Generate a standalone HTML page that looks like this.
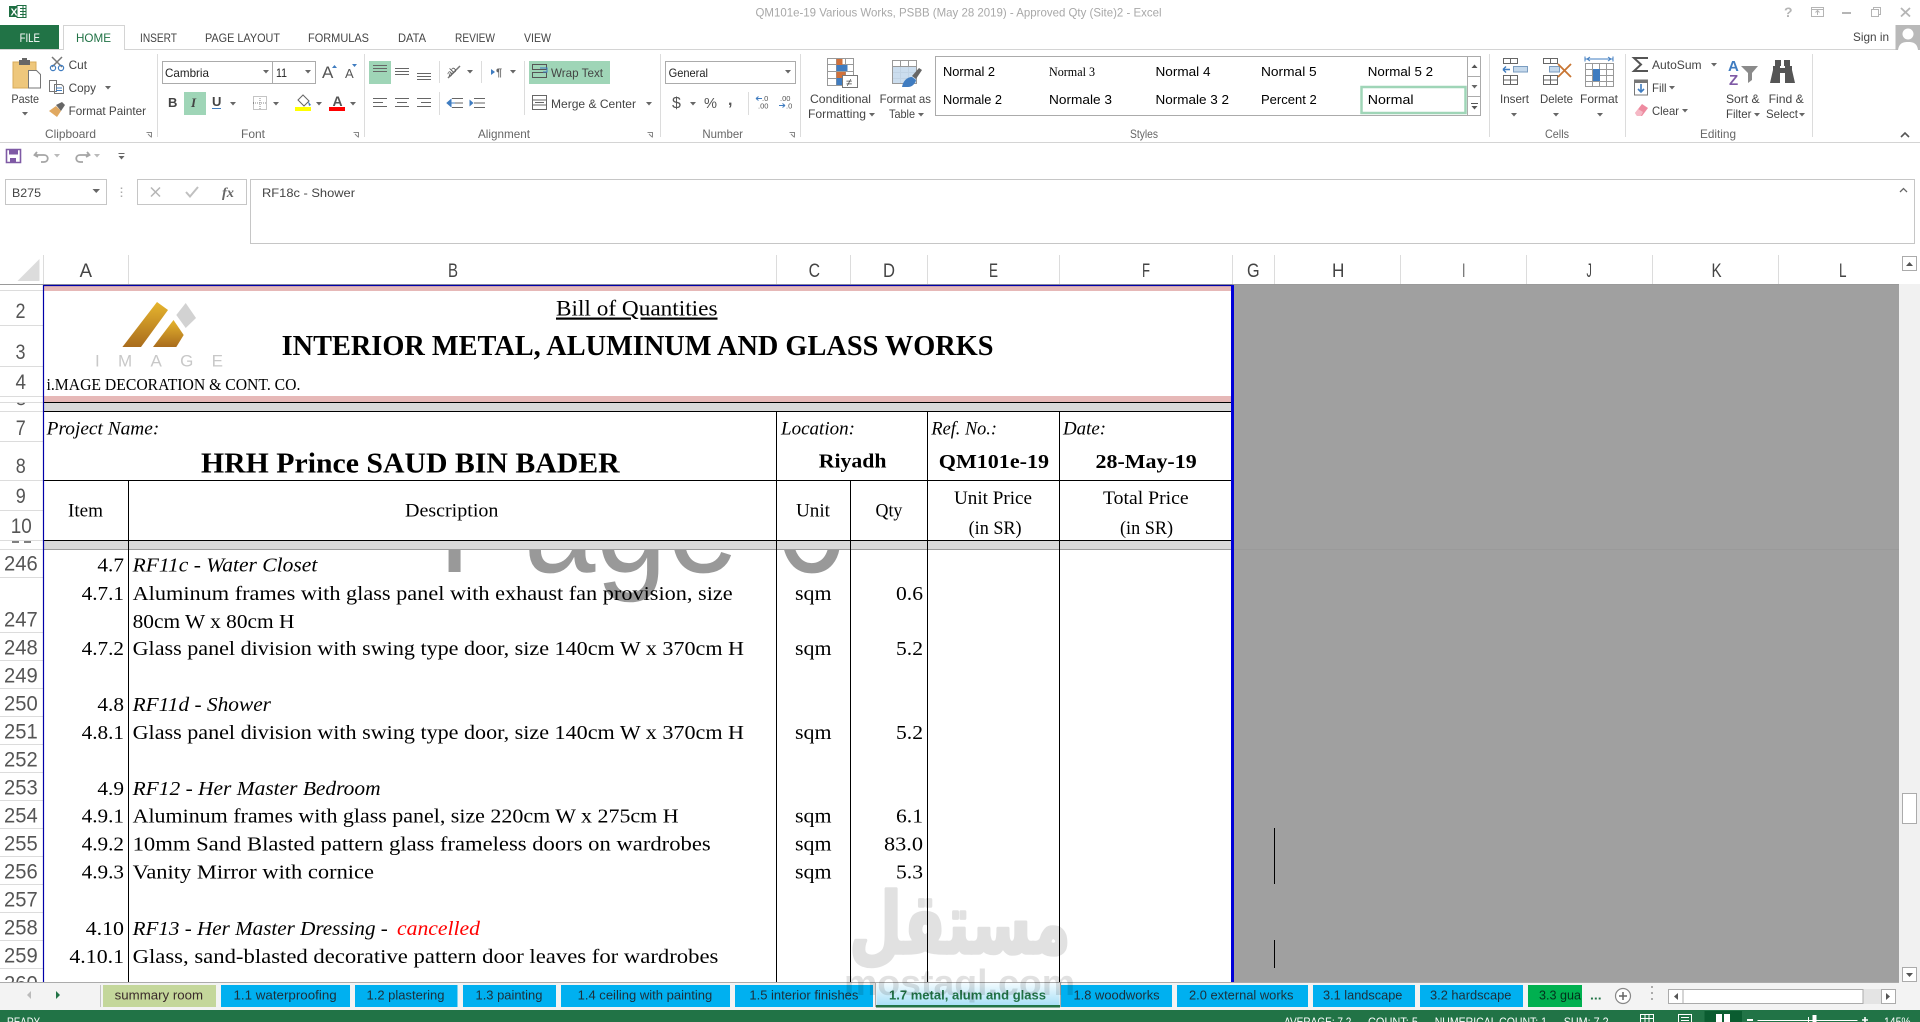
<!DOCTYPE html>
<html lang="en"><head><meta charset="utf-8"><title>Excel</title>
<style>
html,body{margin:0;padding:0;background:#fff;overflow:hidden}
svg{display:block;font-family:"Liberation Sans",sans-serif}
.u{font-size:12px;fill:#444}
.l{font-size:12px;fill:#666}
.tb{font-size:12px;fill:#444}
.s{font-family:"Liberation Serif",serif;font-size:20px;fill:#000}
.i{font-family:"Liberation Serif",serif;font-size:20px;font-style:italic;fill:#000}
.b{font-family:"Liberation Serif",serif;font-weight:bold;fill:#000}
.c{font-size:19.5px;fill:#444}
.r{font-size:21px;fill:#555}
.t{font-size:12.5px;fill:#1c2f3a}
.st{font-size:11.5px;fill:#fff}
.g{font-size:12px;fill:#000}
.k{stroke:#000;stroke-width:1;fill:none}
.h{stroke:#dcdcdc;stroke-width:1;fill:none}
.a{stroke:#666;stroke-width:1;fill:none}
</style></head><body>
<svg width="1920" height="1022" viewBox="0 0 1920 1022" xmlns="http://www.w3.org/2000/svg">
<defs>
<path id="t" d="M0 0h6l-3 3.5z" fill="#666"/>
<clipPath id="wm"><rect x="300" y="549" width="700" height="120"/></clipPath>
<clipPath id="sh"><rect x="0" y="285" width="1920" height="697"/></clipPath>
<clipPath id="sb"><rect x="0" y="1010" width="1920" height="12"/></clipPath>
<linearGradient id="gold" x1="0" y1="0" x2="0" y2="1"><stop offset="0" stop-color="#e6b52e"/><stop offset="1" stop-color="#a96c1d"/></linearGradient>
<linearGradient id="act" x1="0" y1="0" x2="0" y2="1"><stop offset="0" stop-color="#f2fbfe"/><stop offset="1" stop-color="#a3def7"/></linearGradient>
</defs>
<rect width="1920" height="1022" fill="#fff"/>

<!-- title bar -->
<rect x="9" y="6" width="11" height="11" fill="#1e6e42"/>
<rect x="17" y="5.5" width="9" height="12" fill="#fff" stroke="#1e6e42"/>
<path d="M20 8.5h6M20 11.5h6M20 14.5h6M23 5.5v12" stroke="#1e6e42" fill="none"/>
<text x="10.5" y="15.5" font-size="10.5" font-weight="bold" fill="#fff">X</text>
<text x="755.5" y="16.7" font-size="12" fill="#a8a8a8" textLength="406" lengthAdjust="spacingAndGlyphs">QM101e-19 Various Works, PSBB (May 28 2019) - Approved Qty (Site)2 - Excel</text>
<text x="1784" y="17" font-size="14" font-weight="bold" fill="#b5b5b5">?</text>
<rect x="1811.5" y="7.5" width="12" height="9" fill="none" stroke="#b5b5b5"/><path d="M1811.5 9.5h12M1817.5 15v-4M1815.5 12.5l2-2 2 2" stroke="#b5b5b5" fill="none"/>
<rect x="1842" y="12" width="9" height="2" fill="#b5b5b5"/>
<path d="M1871.5 9.5h7v7h-7zM1873.5 9.5v-2h7v7h-2" stroke="#b5b5b5" fill="none"/>
<path d="M1901 8l9 8.5M1910 8l-9 8.5" stroke="#b5b5b5" stroke-width="1.8" fill="none"/>

<!-- tabs -->
<rect x="0" y="25" width="59" height="25" fill="#217346"/>
<text x="19.6" y="42" class="tb" style="fill:#fff" textLength="20.4" lengthAdjust="spacingAndGlyphs">FILE</text>
<path d="M0 49.5H1920" stroke="#d4d4d4"/>
<path d="M63.5 50V25.5H124.5V50" stroke="#d4d4d4" fill="#fff"/>
<text x="76" y="42" class="tb" style="fill:#217346" textLength="35" lengthAdjust="spacingAndGlyphs">HOME</text>
<text x="140" y="42" class="tb" textLength="37" lengthAdjust="spacingAndGlyphs">INSERT</text>
<text x="205" y="42" class="tb" textLength="75" lengthAdjust="spacingAndGlyphs">PAGE LAYOUT</text>
<text x="308" y="42" class="tb" textLength="61" lengthAdjust="spacingAndGlyphs">FORMULAS</text>
<text x="398" y="42" class="tb" textLength="28" lengthAdjust="spacingAndGlyphs">DATA</text>
<text x="455" y="42" class="tb" textLength="40" lengthAdjust="spacingAndGlyphs">REVIEW</text>
<text x="524" y="42" class="tb" textLength="27" lengthAdjust="spacingAndGlyphs">VIEW</text>
<text x="1853" y="41" class="tb" textLength="36" lengthAdjust="spacingAndGlyphs">Sign in</text>
<rect x="1895.5" y="25" width="24.5" height="25" fill="#b9b9b9"/>
<circle cx="1908" cy="34" r="5.5" fill="#fff"/><path d="M1898 50c1-7 5-8 10-8s9 1 10 8z" fill="#fff"/>

<!-- ribbon -->
<path d="M0 142.5H1920" stroke="#d4d4d4"/>
<path d="M157.5 54V137M364.5 54V137M660.5 54V137M800.5 54V137M1489.5 54V137M1625.5 54V137M1812.5 54V137" stroke="#dcdcdc"/>
<!-- paste -->
<rect x="13" y="62" width="23" height="26" fill="#eec77c" stroke="#d8ab5a"/>
<rect x="19" y="60" width="11" height="5" fill="#666"/><rect x="22" y="58" width="5" height="3" fill="#666"/>
<path d="M28.5 70.5h8l4 4v13.5h-12z" fill="#fff" stroke="#777"/>
<text x="11.4" y="103" class="u" textLength="27.6" lengthAdjust="spacingAndGlyphs">Paste</text>
<use href="#t" x="22" y="112"/>
<!-- cut -->
<path d="M52 57l10 10M62 57l-10 10" stroke="#777" stroke-width="1.5"/>
<circle cx="53" cy="68" r="2.6" fill="none" stroke="#3f7cc0" stroke-width="1.2"/><circle cx="61" cy="68" r="2.6" fill="none" stroke="#3f7cc0" stroke-width="1.2"/>
<text x="68.6" y="69" class="u" textLength="18.4" lengthAdjust="spacingAndGlyphs">Cut</text>
<!-- copy -->
<path d="M49.5 80.5h7v11h-7zM54.5 84.5h7l2 2v7h-9z" fill="#fff" stroke="#777"/><path d="M56 88h6M56 90.5h6" stroke="#3f7cc0"/>
<text x="68.6" y="92" class="u" textLength="27.4" lengthAdjust="spacingAndGlyphs">Copy</text>
<use href="#t" x="105" y="86"/>
<!-- painter -->
<path d="M49 111l7-5 5 5-4 6z" fill="#e0a860"/><path d="M56 105l6-3 3 3-4 6z" fill="#666"/>
<text x="68.6" y="115" class="u" textLength="77.4" lengthAdjust="spacingAndGlyphs">Format Painter</text>
<text x="45" y="138" class="l" textLength="51" lengthAdjust="spacingAndGlyphs">Clipboard</text>
<path d="M146.5 132.5h5v5M148 134l3 3" stroke="#888" fill="none"/>
<!-- font -->
<rect x="162.5" y="61.5" width="110" height="22" fill="#fff" stroke="#ababab"/>
<rect x="272.5" y="61.5" width="43" height="22" fill="#fff" stroke="#ababab"/>
<text x="165" y="77" class="u" style="fill:#222" textLength="44" lengthAdjust="spacingAndGlyphs">Cambria</text>
<text x="276" y="77" class="u" style="fill:#222" textLength="11" lengthAdjust="spacingAndGlyphs">11</text>
<use href="#t" x="263" y="70"/><use href="#t" x="305" y="70"/>
<text x="322" y="78" font-size="17" fill="#555">A</text><path d="M332 68l2.5-3 2.5 3z" fill="#3f7cc0"/>
<text x="345" y="78" font-size="13" fill="#555">A</text><path d="M352 64h5l-2.500 3z" fill="#3f7cc0"/>
<text x="168" y="107" font-size="13" font-weight="bold" fill="#444">B</text>
<rect x="184" y="92" width="22" height="23" fill="#9fd5b7"/>
<text x="191" y="107" font-size="13" font-style="italic" font-weight="bold" fill="#444" font-family="Liberation Serif">I</text>
<text x="212" y="106" font-size="13" font-weight="bold" fill="#444">U</text><path d="M212 108.500h9" stroke="#3f7cc0"/>
<use href="#t" x="230" y="102"/>
<path d="M253.500 96.500h13v13h-13zM260 96v14M253 103h14" stroke="#888" stroke-dasharray="1 1" fill="none"/>
<use href="#t" x="273" y="102"/>
<path d="M298 100l5-5 6 6-5 5z" fill="#fff" stroke="#666"/><path d="M308 101l3 4-2 1z" fill="#3f7cc0"/>
<rect x="295" y="107" width="16" height="4" fill="#ff0"/><use href="#t" x="316" y="102"/>
<text x="332.500" y="106" font-size="14" font-weight="bold" fill="#555">A</text>
<rect x="329" y="107" width="16" height="4" fill="#f00"/><use href="#t" x="350" y="102"/>
<text x="241" y="138" class="l" textLength="24" lengthAdjust="spacingAndGlyphs">Font</text>
<path d="M353.500 132.500h5v5M355 134l3 3" stroke="#888" fill="none"/>
<!-- alignment -->
<rect x="369" y="61" width="22" height="23" fill="#9fd5b7"/>
<rect x="529" y="61" width="81" height="23" fill="#9fd5b7"/>
<path d="M373 65.500h14M373 68.500h14M373 71.500h14M395 68.500h14M395 71.500h14M395 74.500h14M417 73.500h14M417 76.500h14M417 79.500h14" stroke="#666"/>
<path d="M373 98.500h14M373 102.500h10M373 106.500h14M395 98.500h14M397 102.500h10M395 106.500h14M417 98.500h14M421 102.500h10M417 106.500h14" stroke="#666"/>
<path d="M448 78l12-12" stroke="#777" stroke-width="1.5"/><text x="447" y="76" font-size="9" fill="#555" transform="rotate(-45 450 73)">ab</text>
<use href="#t" x="467" y="70"/>
<path d="M491 69l4 3-4 3z" fill="#3f7cc0"/><text x="496" y="76" font-size="11" font-weight="bold" fill="#666">¶</text>
<use href="#t" x="510" y="70"/>
<path d="M439.500 61V83M439.500 92V115M481.500 61V83M524.500 61V115" stroke="#dcdcdc"/>
<path d="M452 98.500h11M455 103h8M452 107.500h11M474 98.500h11M474 103h11M474 107.500h11" stroke="#666"/>
<path d="M447 103l4-3.500v7zM451 103h4" fill="#3f7cc0" stroke="#3f7cc0"/><path d="M473.500 103l-4-3.500v7z" fill="#3f7cc0"/>
<rect x="532.500" y="64.500" width="14" height="5" fill="none" stroke="#555"/><rect x="532.500" y="72.500" width="14" height="5" fill="none" stroke="#555"/>
<path d="M540 68h7v4h-4" stroke="#3f7cc0" fill="none"/>
<text x="551" y="77" class="u" textLength="52" lengthAdjust="spacingAndGlyphs">Wrap Text</text>
<path d="M532.500 95.500h14v14h-14zM532.500 100h14M532.500 105h14M535 102.500h9" stroke="#666" fill="none"/>
<text x="551" y="108" class="u" textLength="85" lengthAdjust="spacingAndGlyphs">Merge &amp; Center</text>
<use href="#t" x="646" y="102"/>
<text x="478" y="138" class="l" textLength="52" lengthAdjust="spacingAndGlyphs">Alignment</text>
<path d="M647.500 132.500h5v5M649 134l3 3" stroke="#888" fill="none"/>
<!-- number -->
<rect x="665.500" y="61.500" width="130" height="22" fill="#fff" stroke="#ababab"/>
<text x="668.600" y="77" class="u" style="fill:#222" textLength="39.400" lengthAdjust="spacingAndGlyphs">General</text>
<use href="#t" x="785" y="70"/>
<text x="672" y="108" font-size="16" fill="#555">$</text><use href="#t" x="690" y="102"/>
<text x="704" y="108" font-size="15" fill="#555" textLength="13" lengthAdjust="spacingAndGlyphs">%</text>
<text x="728" y="105" font-size="16" font-weight="bold" fill="#555">,</text>
<path d="M748.500 92V115" stroke="#dcdcdc"/>
<text x="762" y="101" font-size="7.500" fill="#555">.0</text><text x="758" y="108.500" font-size="7.500" fill="#555">.00</text>
<path d="M756 98.500h6M756 98.500l2.500-2M756 98.500l2.500 2" stroke="#3f7cc0"/>
<text x="780" y="101" font-size="7.500" fill="#555">.00</text><text x="786" y="108.500" font-size="7.500" fill="#555">.0</text>
<path d="M779 105.500h6M785 105.500l-2.500-2M785 105.500l-2.500 2" stroke="#3f7cc0"/>
<text x="702.400" y="138" class="l" textLength="40.600" lengthAdjust="spacingAndGlyphs">Number</text>
<path d="M789.500 132.500h5v5M791 134l3 3" stroke="#888" fill="none"/>
<!-- conditional -->
<path d="M827.500 58.500h26v27h-26zM827.500 64.500h26M827.500 71.500h26M827.500 78.500h26M836.500 58.500v27M845.500 58.500v27" stroke="#999" fill="#fff"/>
<rect x="836.500" y="59" width="6" height="6" fill="#d0703a"/><rect x="836.500" y="65" width="11" height="6" fill="#3f7cc0"/><rect x="836.500" y="72" width="9" height="6" fill="#d0703a"/><rect x="836.500" y="78" width="6" height="7" fill="#3f7cc0"/>
<rect x="842.500" y="75.500" width="15" height="12" fill="#fff" stroke="#777"/><text x="846" y="86" font-size="11" fill="#444">≠</text>
<text x="810" y="103" class="u" textLength="61" lengthAdjust="spacingAndGlyphs">Conditional</text>
<text x="808" y="118" class="u" textLength="58" lengthAdjust="spacingAndGlyphs">Formatting</text><use href="#t" x="869" y="113"/>
<!-- format as table -->
<path d="M892.500 60.500h24v23h-24zM892.500 66.500h24M892.500 72.500h24M892.500 78.500h24M900.500 60.500v23M908.500 60.500v23" stroke="#999" fill="#fff"/>
<rect x="893" y="67" width="23" height="16" fill="#c5d9ec" opacity=".9"/>
<path d="M912 76l7-8 3 2-6 9z" fill="#666"/><path d="M902 87c1-6 5-10 10-10l4 3c-1 4-4 7-8 7z" fill="#3f7cc0"/>
<text x="879.600" y="103" class="u" textLength="51.400" lengthAdjust="spacingAndGlyphs">Format as</text>
<text x="889" y="118" class="u" textLength="26" lengthAdjust="spacingAndGlyphs">Table</text><use href="#t" x="918" y="113"/>
<!-- styles -->
<rect x="935.500" y="56.500" width="545" height="59" fill="#fff" stroke="#ababab"/>
<path d="M1467.500 56.500V115.500M1467.500 76.500H1481M1467.500 96.500H1481" stroke="#ababab"/>
<path d="M1471.500 68l3-3.500 3 3.500z" fill="#555"/><use href="#t" x="1471.500" y="85"/><path d="M1471.500 106h6l-3 3.500z" stroke="none" fill="#555"/><path d="M1471 103.500h7" stroke="#555"/>
<rect x="1361.500" y="87" width="104" height="26" fill="#fff" stroke="#9fd5b7" stroke-width="2.500"/>
<g font-size="12.500" fill="#000">
<text x="943" y="76" textLength="52" lengthAdjust="spacingAndGlyphs">Normal 2</text>
<text x="1049" y="76" font-family="Liberation Serif" textLength="46" lengthAdjust="spacingAndGlyphs">Normal 3</text>
<text x="1155.500" y="76" textLength="55" lengthAdjust="spacingAndGlyphs">Normal 4</text>
<text x="1261" y="76" textLength="55.700" lengthAdjust="spacingAndGlyphs">Normal 5</text>
<text x="1367.800" y="76" textLength="65.200" lengthAdjust="spacingAndGlyphs">Normal 5 2</text>
<text x="943" y="104" textLength="59" lengthAdjust="spacingAndGlyphs">Normale 2</text>
<text x="1049" y="104" textLength="63" lengthAdjust="spacingAndGlyphs">Normale 3</text>
<text x="1155.500" y="104" textLength="73.500" lengthAdjust="spacingAndGlyphs">Normale 3 2</text>
<text x="1261" y="104" textLength="55.700" lengthAdjust="spacingAndGlyphs">Percent 2</text>
<text x="1367.800" y="104" textLength="45.700" lengthAdjust="spacingAndGlyphs">Normal</text>
</g>
<text x="1130" y="138" class="l" textLength="28" lengthAdjust="spacingAndGlyphs">Styles</text>
<!-- cells -->
<path d="M1503.500 58.500h14v5h-14zM1510.500 58.500v5M1503.500 75.500h14v9h-14zM1503.500 80h14M1510.500 75.500v9" stroke="#666" fill="#fff"/>
<rect x="1513.500" y="66.500" width="14" height="5.500" fill="#c5d9ec" stroke="#7a9cc0"/><path d="M1503 69.500h7M1503 69.500l3-3M1503 69.500l3 3" stroke="#3f7cc0" stroke-width="1.400"/>
<path d="M1543.500 58.500h14v5h-14zM1550.500 58.500v5M1543.500 75.500h14v9h-14zM1543.500 80h14M1550.500 75.500v9" stroke="#666" fill="#fff"/>
<rect x="1549.500" y="66.500" width="10" height="5.500" fill="#c5d9ec" stroke="#7a9cc0"/><path d="M1558 64l13 13M1571 64l-13 13" stroke="#c87533" stroke-width="1.800"/>
<path d="M1585.500 63.500h28v23h-28zM1585.500 69.500h28M1585.500 75.500h28M1585.500 81.500h28M1592.500 63.500v23M1599.500 63.500v23M1606.500 63.500v23" stroke="#999" fill="#fff"/>
<rect x="1593" y="69" width="7" height="12" fill="#3f7cc0"/><path d="M1585 59h28M1585 56.500v5M1613 56.500v5M1587 59l3-2M1587 59l3 2M1611 59l-3-2M1611 59l-3 2" stroke="#3f7cc0" fill="none"/>
<text x="1500" y="103" class="u" textLength="29" lengthAdjust="spacingAndGlyphs">Insert</text>
<text x="1540" y="103" class="u" textLength="33" lengthAdjust="spacingAndGlyphs">Delete</text>
<text x="1580" y="103" class="u" textLength="38" lengthAdjust="spacingAndGlyphs">Format</text>
<use href="#t" x="1511" y="113"/><use href="#t" x="1553" y="113"/><use href="#t" x="1597" y="113"/>
<text x="1545" y="138" class="l" textLength="24" lengthAdjust="spacingAndGlyphs">Cells</text>
<!-- editing -->
<path d="M1648 58h-14l7 6.500-7 6.500h14" stroke="#555" stroke-width="2" fill="none"/>
<text x="1652" y="69" class="u" textLength="49.600" lengthAdjust="spacingAndGlyphs">AutoSum</text><use href="#t" x="1711" y="63"/>
<rect x="1634.500" y="80" width="13" height="15" fill="#fff" stroke="#777"/><rect x="1634.500" y="80" width="13" height="3" fill="#777"/><path d="M1641 84v8M1638 89l3 3 3-3" stroke="#3f7cc0" stroke-width="1.600" fill="none"/>
<text x="1652" y="92" class="u" textLength="14.600" lengthAdjust="spacingAndGlyphs">Fill</text><use href="#t" x="1669" y="86"/>
<path d="M1635 113l7-9 6 4-6 8h-5z" fill="#ee8ba0"/><path d="M1635 113l3-4 5 3-2 4h-4z" fill="#f5b8c5"/>
<text x="1652" y="115" class="u" textLength="27" lengthAdjust="spacingAndGlyphs">Clear</text><use href="#t" x="1682" y="109"/>
<text x="1728" y="71" font-size="15" font-weight="bold" fill="#3f7cc0">A</text>
<text x="1729" y="85" font-size="15" font-weight="bold" fill="#7f5aa5">Z</text>
<path d="M1741 66h17l-6 7v7l-4 3v-10z" fill="#8a8a8a"/>
<text x="1726" y="103" class="u" textLength="33.600" lengthAdjust="spacingAndGlyphs">Sort &amp;</text>
<text x="1726" y="118" class="u" textLength="25.400" lengthAdjust="spacingAndGlyphs">Filter</text><use href="#t" x="1754" y="113"/>
<path d="M1775 60h6v6h-1v2h5v-2h-1v-6h6v6h2v4l3 13h-10v-10h-5v10h-10l3-13v-4h2z" fill="#555"/>
<text x="1768.600" y="103" class="u" textLength="35.100" lengthAdjust="spacingAndGlyphs">Find &amp;</text>
<text x="1766" y="118" class="u" textLength="32" lengthAdjust="spacingAndGlyphs">Select</text><use href="#t" x="1799" y="113"/>
<text x="1700" y="138" class="l" textLength="36" lengthAdjust="spacingAndGlyphs">Editing</text>
<path d="M1901 137l4-4 4 4" stroke="#555" stroke-width="1.600" fill="none"/>

<!-- QAT -->
<path d="M6.500 149.500h14v13h-14z" fill="#fff" stroke="#7f5aa5" stroke-width="1.600"/><rect x="9" y="150" width="9" height="4.500" fill="#7f5aa5"/><rect x="10" y="158" width="6" height="4" fill="#7f5aa5"/>
<path d="M37 152l-2.500 3 3.500 2M35 155h9c5 0 5 7 0 7h-3" stroke="#a5a5a5" stroke-width="1.800" fill="none"/><use href="#t" x="54" y="154" opacity=".45"/>
<path d="M87 152l2.500 3-3.500 2M89 155h-9c-5 0-5 7 0 7h3" stroke="#a5a5a5" stroke-width="1.800" fill="none"/><use href="#t" x="94" y="154" opacity=".45"/>
<path d="M118.500 153.500h6" stroke="#666"/><use href="#t" x="118.500" y="156"/>

<!-- formula bar -->
<rect x="5.500" y="179.500" width="101" height="25" fill="#fff" stroke="#c6c6c6"/>
<text x="12" y="197" class="u" textLength="29" lengthAdjust="spacingAndGlyphs">B275</text>
<path d="M92.500 189h7.500l-3.750 4z" fill="#666"/>
<path d="M121.500 187.500v1.500M121.500 191.500v1.500M121.500 195.500v1.500" stroke="#aaa" stroke-width="1.500"/>
<rect x="137.500" y="179.500" width="109" height="25" fill="#fff" stroke="#c6c6c6"/>
<path d="M151 187.500l9 9M160 187.500l-9 9" stroke="#b5b5b5" stroke-width="1.500"/>
<path d="M186 192l4 4.500 8-9.500" stroke="#c0c0c0" stroke-width="2" fill="none"/>
<text x="222" y="197" font-family="Liberation Serif" font-style="italic" font-weight="bold" font-size="14" fill="#666" textLength="12" lengthAdjust="spacingAndGlyphs">fx</text>
<rect x="250.500" y="179.500" width="1664" height="64" fill="#fff" stroke="#c6c6c6"/>
<text x="262" y="197" class="u" textLength="93" lengthAdjust="spacingAndGlyphs">RF18c - Shower</text>
<path d="M1900 192l3.500-3.500 3.500 3.500" stroke="#666" fill="none" stroke-width="1.300"/>

<!-- column headers -->
<path d="M39.500 259v22h-22z" fill="#dcdcdc"/>
<path d="M43.500 255V284M128.500 255V284M776.500 255V284M850.500 255V284M927.500 255V284M1059.500 255V284M1232.500 255V284M1274.500 255V284M1400.500 255V284M1526.500 255V284M1652.500 255V284M1778.500 255V284" class="h"/>
<path d="M0 284.500H1900" stroke="#9a9a9a"/>
<g class="c">
<text x="79.600" y="277" textLength="12.400" lengthAdjust="spacingAndGlyphs">A</text>
<text x="448" y="277" textLength="10" lengthAdjust="spacingAndGlyphs">B</text>
<text x="808.600" y="277" textLength="11.400" lengthAdjust="spacingAndGlyphs">C</text>
<text x="883" y="277" textLength="12" lengthAdjust="spacingAndGlyphs">D</text>
<text x="989" y="277" textLength="9" lengthAdjust="spacingAndGlyphs">E</text>
<text x="1142" y="277" textLength="8" lengthAdjust="spacingAndGlyphs">F</text>
<text x="1247" y="277" textLength="12.600" lengthAdjust="spacingAndGlyphs">G</text>
<text x="1332" y="277" textLength="12.400" lengthAdjust="spacingAndGlyphs">H</text>
<text x="1462.400" y="277" textLength="2.800" lengthAdjust="spacingAndGlyphs">I</text>
<text x="1586.500" y="277" textLength="5.300" lengthAdjust="spacingAndGlyphs">J</text>
<text x="1711.500" y="277" textLength="10.100" lengthAdjust="spacingAndGlyphs">K</text>
<text x="1839" y="277" textLength="7.500" lengthAdjust="spacingAndGlyphs">L</text>
</g>

<!-- sheet grey -->
<rect x="1233" y="285" width="666" height="697" fill="#a0a0a0"/>
<path d="M1274.500 828V884M1274.500 940V968" stroke="#000" stroke-width="1"/>

<!-- watermark page -->
<g clip-path="url(#wm)"><text x="438" y="572" font-size="146" fill="#999" textLength="408" lengthAdjust="spacingAndGlyphs">Page 6</text></g>

<!-- row headers -->
<g clip-path="url(#sh)">
<path d="M0 290.500H43M0 325.500H43M0 366.500H43M0 396.500H43M0 402.500H43M0 411.500H43M0 441.500H43M0 480.500H43M0 510.500H43M0 540.500H43M0 549.500H43M0 577.500H43M0 632.500H43M0 660.500H43M0 688.500H43M0 716.500H43M0 744.500H43M0 772.500H43M0 800.500H43M0 828.500H43M0 856.500H43M0 884.500H43M0 912.500H43M0 940.500H43M0 968.500H43" class="h"/>
<path d="M17.500 403c2 2 5 2 7 0M12 542h7M24 542h7" stroke="#555" stroke-width="1.400" fill="none"/>
<g class="r">
<text x="15.500" y="318" textLength="10" lengthAdjust="spacingAndGlyphs">2</text>
<text x="15.500" y="359" textLength="10" lengthAdjust="spacingAndGlyphs">3</text>
<text x="15.500" y="389" textLength="10.500" lengthAdjust="spacingAndGlyphs">4</text>
<text x="15.700" y="435" textLength="10" lengthAdjust="spacingAndGlyphs">7</text>
<text x="15.700" y="473" textLength="10" lengthAdjust="spacingAndGlyphs">8</text>
<text x="15.700" y="503" textLength="10" lengthAdjust="spacingAndGlyphs">9</text>
<text x="10.700" y="533" textLength="21" lengthAdjust="spacingAndGlyphs">10</text>
<text x="4" y="570.700" textLength="33.700" lengthAdjust="spacingAndGlyphs">246</text>
<text x="4" y="626.500" textLength="33.700" lengthAdjust="spacingAndGlyphs">247</text>
<text x="4" y="654.500" textLength="33.700" lengthAdjust="spacingAndGlyphs">248</text>
<text x="4" y="682.500" textLength="33.700" lengthAdjust="spacingAndGlyphs">249</text>
<text x="4" y="710.500" textLength="33.700" lengthAdjust="spacingAndGlyphs">250</text>
<text x="4" y="738.500" textLength="33.700" lengthAdjust="spacingAndGlyphs">251</text>
<text x="4" y="766.500" textLength="33.700" lengthAdjust="spacingAndGlyphs">252</text>
<text x="4" y="794.500" textLength="33.700" lengthAdjust="spacingAndGlyphs">253</text>
<text x="4" y="822.500" textLength="33.700" lengthAdjust="spacingAndGlyphs">254</text>
<text x="4" y="850.500" textLength="33.700" lengthAdjust="spacingAndGlyphs">255</text>
<text x="4" y="878.500" textLength="33.700" lengthAdjust="spacingAndGlyphs">256</text>
<text x="4" y="906.500" textLength="33.700" lengthAdjust="spacingAndGlyphs">257</text>
<text x="4" y="934.500" textLength="33.700" lengthAdjust="spacingAndGlyphs">258</text>
<text x="4" y="962.500" textLength="33.700" lengthAdjust="spacingAndGlyphs">259</text>
<text x="4" y="990.500" textLength="33.700" lengthAdjust="spacingAndGlyphs">260</text>
</g>
</g>

<!-- sheet header bands -->
<rect x="44" y="286" width="1187" height="5" fill="#e6b8b7"/>
<rect x="44" y="396" width="1187" height="6" fill="#e6b8b7"/>
<rect x="44" y="402.500" width="1187" height="8.500" fill="#d9d9d9"/>
<rect x="44" y="540.500" width="1187" height="8.500" fill="#d9d9d9"/>
<path d="M43 402.500H1232M43 411.500H1232M43 480.500H1232M43 540.500H1232" class="k"/>
<path d="M43 549.500H1899" stroke="#9a9a9a"/>
<path d="M128.500 480V982M776.500 411V982M850.500 480V982M927.500 411V982M1059.500 411V982" class="k"/>
<path d="M43.500 285V982" stroke="#0000a8" stroke-width="1.200"/>
<path d="M43 285.500H1233" stroke="#0000a8" stroke-width="1.200"/>
<path d="M1232.500 285V982" stroke="#0000d8" stroke-width="3"/>

<!-- logo -->
<path d="M157 302l11 8-27 37h-18.600z" fill="url(#gold)"/>
<path d="M173.500 320l10.200 15-7.400 12H153z" fill="url(#gold)"/>
<path d="M185.700 303l10.300 15-10.300 10-9.400-13z" fill="#d2d2d2"/>
<text x="95" y="366.700" font-size="17" fill="#c8c8c8" textLength="128">IMAGE</text>

<!-- header text -->
<text x="556" y="315.500" class="s" style="font-size:22px;text-decoration:underline" textLength="161.500" lengthAdjust="spacingAndGlyphs">Bill of Quantities</text>
<text x="281.600" y="355" class="b" font-size="29" textLength="711.900" lengthAdjust="spacingAndGlyphs">INTERIOR METAL, ALUMINUM AND GLASS WORKS</text>
<text x="46.500" y="390" class="s" style="font-size:16.500px" textLength="253.900" lengthAdjust="spacingAndGlyphs">i.MAGE DECORATION &amp; CONT. CO.</text>
<text x="46.700" y="434.300" class="i" style="font-size:18.500px" textLength="112.600" lengthAdjust="spacingAndGlyphs">Project Name:</text>
<text x="781" y="434.300" class="i" style="font-size:18.500px" textLength="74" lengthAdjust="spacingAndGlyphs">Location:</text>
<text x="931.400" y="434.300" class="i" style="font-size:18.500px" textLength="65.600" lengthAdjust="spacingAndGlyphs">Ref. No.:</text>
<text x="1063" y="434.300" class="i" style="font-size:18.500px" textLength="43" lengthAdjust="spacingAndGlyphs">Date:</text>
<text x="201" y="472.600" class="b" font-size="29" textLength="418.600" lengthAdjust="spacingAndGlyphs">HRH Prince SAUD BIN BADER</text>
<text x="818.800" y="467.700" class="b" font-size="20" textLength="67.700" lengthAdjust="spacingAndGlyphs">Riyadh</text>
<text x="938.800" y="468" class="b" font-size="20" textLength="110.200" lengthAdjust="spacingAndGlyphs">QM101e-19</text>
<text x="1095.500" y="468" class="b" font-size="20" textLength="101.200" lengthAdjust="spacingAndGlyphs">28-May-19</text>
<g class="s" style="font-size:18.500px">
<text x="68" y="516.700" textLength="35" lengthAdjust="spacingAndGlyphs">Item</text>
<text x="405" y="516.700" textLength="93.400" lengthAdjust="spacingAndGlyphs">Description</text>
<text x="796" y="516.700" textLength="34" lengthAdjust="spacingAndGlyphs">Unit</text>
<text x="875.500" y="516.700" textLength="26.900" lengthAdjust="spacingAndGlyphs">Qty</text>
<text x="954" y="504" textLength="78" lengthAdjust="spacingAndGlyphs">Unit Price</text>
<text x="968.600" y="534" textLength="53" lengthAdjust="spacingAndGlyphs">(in SR)</text>
<text x="1103" y="504" textLength="85.600" lengthAdjust="spacingAndGlyphs">Total Price</text>
<text x="1120" y="534" textLength="53" lengthAdjust="spacingAndGlyphs">(in SR)</text>
</g>

<!-- data -->
<g class="s">
<text x="97.400" y="571.700" textLength="26.600" lengthAdjust="spacingAndGlyphs">4.7</text>
<text x="81.600" y="600" textLength="42.400" lengthAdjust="spacingAndGlyphs">4.7.1</text>
<text x="81.600" y="655" textLength="42.400" lengthAdjust="spacingAndGlyphs">4.7.2</text>
<text x="97.400" y="711" textLength="26.600" lengthAdjust="spacingAndGlyphs">4.8</text>
<text x="81.600" y="739" textLength="42.400" lengthAdjust="spacingAndGlyphs">4.8.1</text>
<text x="97.400" y="795" textLength="26.600" lengthAdjust="spacingAndGlyphs">4.9</text>
<text x="81.600" y="822.700" textLength="42.400" lengthAdjust="spacingAndGlyphs">4.9.1</text>
<text x="81.600" y="850.700" textLength="42.400" lengthAdjust="spacingAndGlyphs">4.9.2</text>
<text x="81.600" y="878.700" textLength="42.400" lengthAdjust="spacingAndGlyphs">4.9.3</text>
<text x="85.700" y="935" textLength="38.300" lengthAdjust="spacingAndGlyphs">4.10</text>
<text x="69.400" y="963" textLength="54.600" lengthAdjust="spacingAndGlyphs">4.10.1</text>
<text x="132.600" y="600" textLength="600.100" lengthAdjust="spacingAndGlyphs">Aluminum frames with glass panel with exhaust fan provision, size</text>
<text x="132.600" y="628" textLength="161.800" lengthAdjust="spacingAndGlyphs">80cm W x 80cm H</text>
<text x="132.600" y="655" textLength="611.400" lengthAdjust="spacingAndGlyphs">Glass panel division with swing type door, size 140cm W x 370cm H</text>
<text x="132.600" y="739" textLength="611.400" lengthAdjust="spacingAndGlyphs">Glass panel division with swing type door, size 140cm W x 370cm H</text>
<text x="132.600" y="822.700" textLength="546" lengthAdjust="spacingAndGlyphs">Aluminum frames with glass panel, size 220cm W x 275cm H</text>
<text x="132.600" y="850.700" textLength="578.100" lengthAdjust="spacingAndGlyphs">10mm Sand Blasted pattern glass frameless doors on wardrobes</text>
<text x="132.600" y="878.700" textLength="241.400" lengthAdjust="spacingAndGlyphs">Vanity Mirror with cornice</text>
<text x="132.600" y="963" textLength="585.800" lengthAdjust="spacingAndGlyphs">Glass, sand-blasted decorative pattern door leaves for wardrobes</text>
<text x="795" y="600" textLength="36.500" lengthAdjust="spacingAndGlyphs">sqm</text>
<text x="795" y="655" textLength="36.500" lengthAdjust="spacingAndGlyphs">sqm</text>
<text x="795" y="739" textLength="36.500" lengthAdjust="spacingAndGlyphs">sqm</text>
<text x="795" y="822.700" textLength="36.500" lengthAdjust="spacingAndGlyphs">sqm</text>
<text x="795" y="850.700" textLength="36.500" lengthAdjust="spacingAndGlyphs">sqm</text>
<text x="795" y="878.700" textLength="36.500" lengthAdjust="spacingAndGlyphs">sqm</text>
<text x="896" y="600" textLength="27" lengthAdjust="spacingAndGlyphs">0.6</text>
<text x="896" y="655" textLength="27" lengthAdjust="spacingAndGlyphs">5.2</text>
<text x="896" y="739" textLength="27" lengthAdjust="spacingAndGlyphs">5.2</text>
<text x="896" y="822.700" textLength="27" lengthAdjust="spacingAndGlyphs">6.1</text>
<text x="884" y="850.700" textLength="39" lengthAdjust="spacingAndGlyphs">83.0</text>
<text x="896" y="878.700" textLength="27" lengthAdjust="spacingAndGlyphs">5.3</text>
</g>
<g class="i">
<text x="132.600" y="571.700" textLength="184.700" lengthAdjust="spacingAndGlyphs">RF11c - Water Closet</text>
<text x="132.600" y="711" textLength="138.400" lengthAdjust="spacingAndGlyphs">RF11d - Shower</text>
<text x="132.600" y="795" textLength="248" lengthAdjust="spacingAndGlyphs">RF12 - Her Master Bedroom</text>
<text x="132.600" y="935" textLength="255.200" lengthAdjust="spacingAndGlyphs">RF13 - Her Master Dressing -</text>
<text x="397" y="935" style="fill:#f00" textLength="83" lengthAdjust="spacingAndGlyphs">cancelled</text>
</g>

<!-- vertical scrollbar -->
<rect x="1899" y="250" width="21" height="760" fill="#f1f1f1"/>
<rect x="1899" y="250" width="21" height="34" fill="#fff"/>
<rect x="1902.500" y="256.500" width="14" height="14" fill="#fff" stroke="#ababab"/><path d="M1906 266l3.500-4 3.500 4z" fill="#555"/>
<rect x="1902.500" y="793.500" width="14" height="30" fill="#fff" stroke="#ababab"/>
<rect x="1902.500" y="967.500" width="14" height="14" fill="#fff" stroke="#ababab"/><path d="M1906 973h7l-3.500 4z" fill="#555"/>

<!-- tab strip -->
<rect x="0" y="982" width="1920" height="28" fill="#f3f3f3"/>
<path d="M0 982.500H876M1060 982.500H1899" stroke="#ababab"/>
<path d="M31 991l-4 4 4 4z" fill="#bbb"/><path d="M56 991l4 4-4 4z" fill="#217346"/>
<path d="M100.500 985V1007" stroke="#c4c4c4"/>
<rect x="103" y="985" width="113" height="22" fill="#c4d79b"/>
<rect x="221" y="985" width="129" height="22" fill="#00b0f0"/>
<rect x="355" y="985" width="102.500" height="22" fill="#00b0f0"/>
<rect x="463" y="985" width="93" height="22" fill="#00b0f0"/>
<rect x="561" y="985" width="169" height="22" fill="#00b0f0"/>
<rect x="735" y="985" width="138" height="22" fill="#00b0f0"/>
<path d="M876.500 983V1007H1059.500V983" fill="url(#act)"/>
<path d="M875.500 1007V982.500H1060.500V1007" stroke="#ababab" fill="none"/>
<rect x="876" y="1005" width="184" height="2.500" fill="#217346"/>
<rect x="1061" y="985" width="111" height="22" fill="#00b0f0"/>
<rect x="1177" y="985" width="131" height="22" fill="#00b0f0"/>
<rect x="1313" y="985" width="102" height="22" fill="#00b0f0"/>
<rect x="1420" y="985" width="103" height="22" fill="#00b0f0"/>
<rect x="1528" y="985" width="54" height="22" fill="#00b050"/>
<g class="t">
<text x="114.700" y="999.500" style="fill:#3a2a2a" textLength="88.300" lengthAdjust="spacingAndGlyphs">summary room</text>
<text x="233.500" y="999.500" textLength="103.200" lengthAdjust="spacingAndGlyphs">1.1 waterproofing</text>
<text x="366.500" y="999.500" textLength="78" lengthAdjust="spacingAndGlyphs">1.2 plastering</text>
<text x="475.500" y="999.500" textLength="66.900" lengthAdjust="spacingAndGlyphs">1.3 painting</text>
<text x="577.600" y="999.500" textLength="134.600" lengthAdjust="spacingAndGlyphs">1.4 ceiling with painting</text>
<text x="749.400" y="999.500" textLength="109" lengthAdjust="spacingAndGlyphs">1.5 interior finishes</text>
<text x="889" y="999.500" style="fill:#217346;font-weight:bold" textLength="157" lengthAdjust="spacingAndGlyphs">1.7 metal, alum and glass</text>
<text x="1073.500" y="999.500" textLength="86.100" lengthAdjust="spacingAndGlyphs">1.8 woodworks</text>
<text x="1189" y="999.500" textLength="104.500" lengthAdjust="spacingAndGlyphs">2.0 external works</text>
<text x="1323" y="999.500" textLength="79.400" lengthAdjust="spacingAndGlyphs">3.1 landscape</text>
<text x="1430" y="999.500" textLength="81.400" lengthAdjust="spacingAndGlyphs">3.2 hardscape</text>
<text x="1539" y="999.500" style="fill:#03301c" textLength="42" lengthAdjust="spacingAndGlyphs">3.3 gua</text>
<text x="1590" y="999.500" style="fill:#217346;font-weight:bold" textLength="11.600" lengthAdjust="spacingAndGlyphs">...</text>
</g>
<circle cx="1623" cy="996" r="7.500" fill="#fff" stroke="#888" stroke-width="1.200"/><path d="M1619 996h8M1623 992v8" stroke="#666" stroke-width="1.500"/>
<path d="M1652 986v2M1652 992v2M1652 998v2" stroke="#aaa" stroke-width="2"/>
<rect x="1863" y="989" width="18" height="15" fill="#e4e4e4"/>
<rect x="1668.500" y="989.500" width="14.500" height="14" fill="#fff" stroke="#ababab"/><path d="M1678 993l-4 3.500 4 3.500z" fill="#555"/>
<rect x="1683" y="989.500" width="180" height="14" fill="#fff" stroke="#ababab"/>
<rect x="1881.500" y="989.500" width="14" height="14" fill="#fff" stroke="#ababab"/><path d="M1886 993l4 3.500-4 3.500z" fill="#555"/>

<!-- status bar -->
<rect x="0" y="1010" width="1920" height="12" fill="#217346"/>
<g clip-path="url(#sb)">
<text x="7" y="1026" class="st" textLength="33" lengthAdjust="spacingAndGlyphs">READY</text>
<text x="1284" y="1026" class="st" textLength="67.400" lengthAdjust="spacingAndGlyphs">AVERAGE: 7.2</text>
<text x="1368" y="1026" class="st" textLength="50" lengthAdjust="spacingAndGlyphs">COUNT: 5</text>
<text x="1434.700" y="1026" class="st" textLength="112.300" lengthAdjust="spacingAndGlyphs">NUMERICAL COUNT: 1</text>
<text x="1563.700" y="1026" class="st" textLength="44.900" lengthAdjust="spacingAndGlyphs">SUM: 7.2</text>
<path d="M1640.500 1014.500h13v10h-13zM1645 1014v10M1649 1014v10M1640 1018.500h14" stroke="#fff" fill="none"/>
<path d="M1678.500 1014.500h13v10h-13zM1681 1017.500h8M1681 1020.500h8" stroke="#fff" fill="none"/>
<rect x="1704.500" y="1011" width="37.500" height="11" fill="#0a5c30"/>
<rect x="1716" y="1014" width="6" height="8" fill="#fff"/><rect x="1724" y="1014" width="6" height="8" fill="#fff"/>
<rect x="1747" y="1019" width="6" height="2" fill="#fff"/>
<path d="M1757.500 1020.500H1857.500" stroke="#fff"/><rect x="1812.500" y="1015" width="4" height="7" fill="#fff"/><path d="M1808.500 1017v5" stroke="#fff"/>
<path d="M1862 1020h6M1865 1017v6" stroke="#fff" stroke-width="1.600"/>
<text x="1884" y="1026" class="st" textLength="26.600" lengthAdjust="spacingAndGlyphs">145%</text>
</g>

<!-- mostaql watermark -->
<g opacity=".115">
<text x="0" y="0" fill="#000" stroke="#000" stroke-width="3.500" stroke-linejoin="round" font-family="'DejaVu Sans',sans-serif" font-size="84" font-weight="bold" text-anchor="middle" direction="rtl" transform="translate(960 953) scale(0.72 1)">مستقل</text>
<text x="844" y="995" fill="#000" font-family="'Liberation Sans',sans-serif" font-size="36" font-weight="bold" textLength="231" lengthAdjust="spacingAndGlyphs">mostaql.com</text>
</g>
</svg>
</body></html>
